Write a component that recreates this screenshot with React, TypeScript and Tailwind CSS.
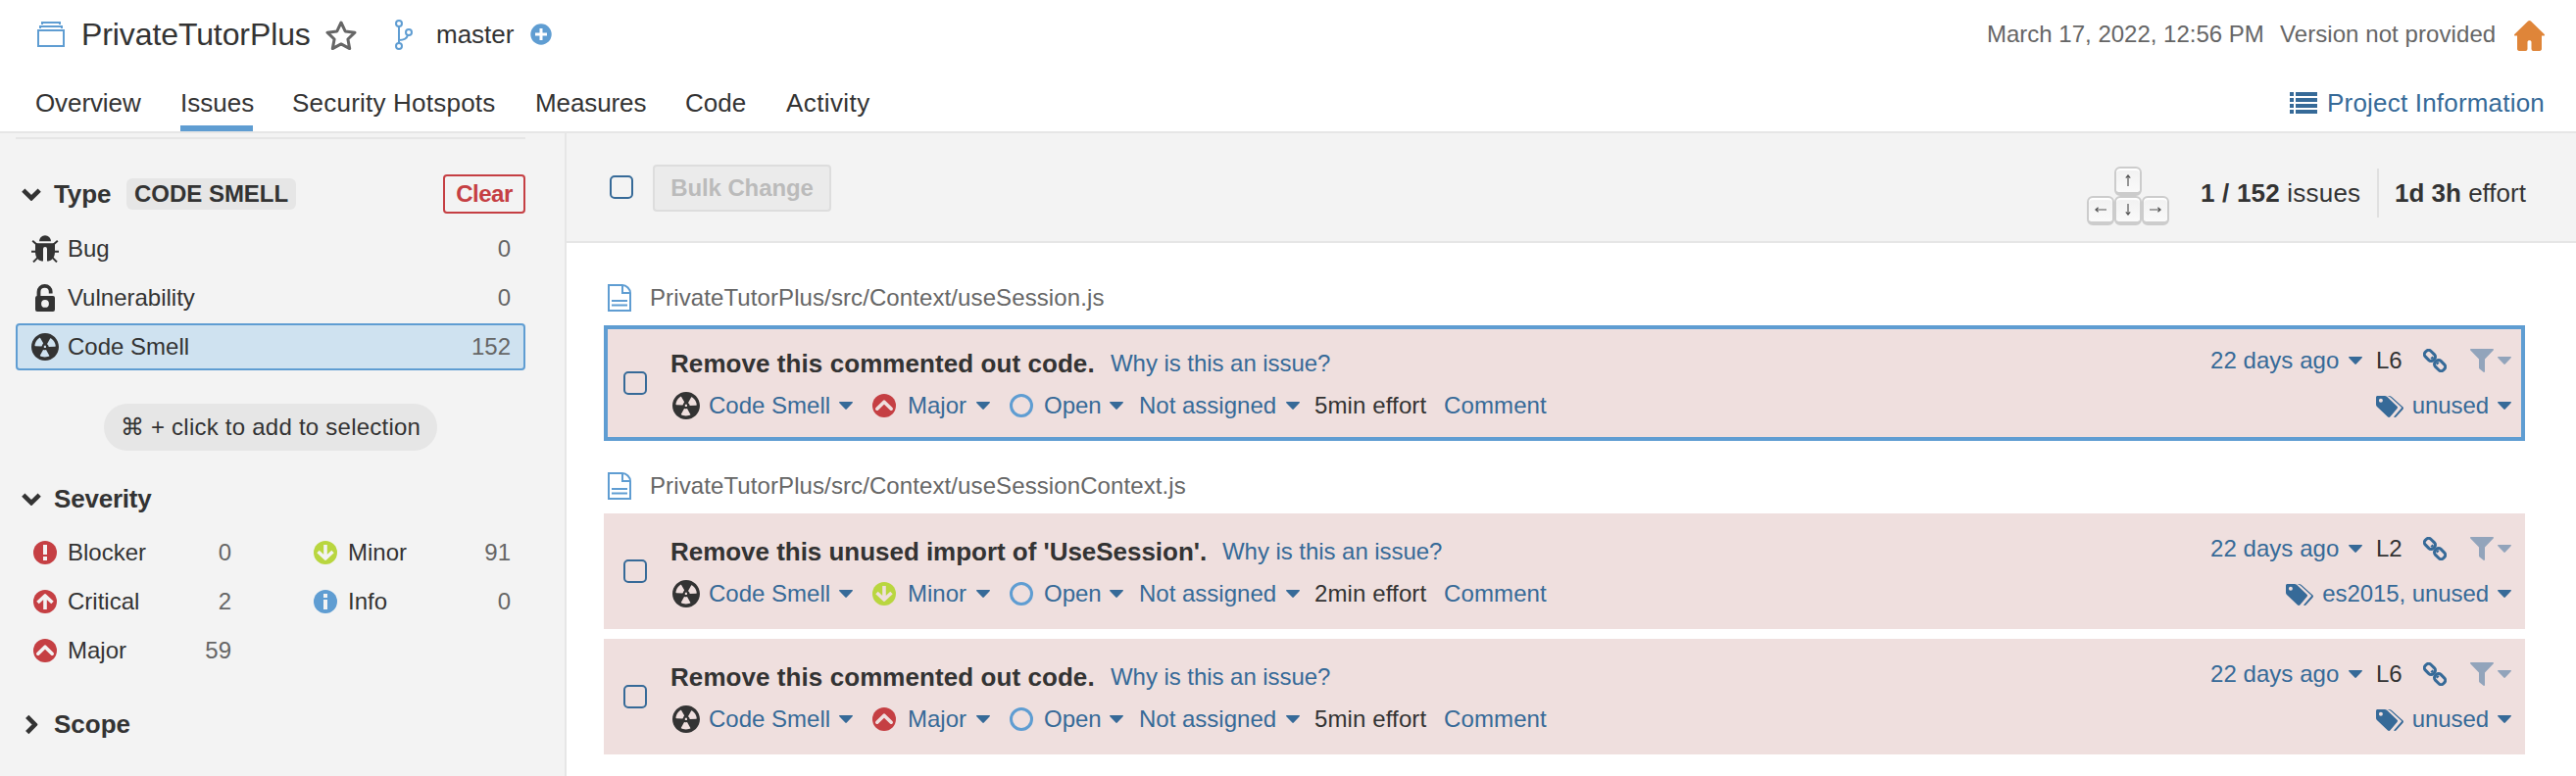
import React from "react";

const Caret = ({ muted = false }: { muted?: boolean }) => (
  <svg viewBox="0 0 14 8" className={muted ? "h-2 w-3.5 fill-[#92a4bb]" : "h-2 w-3.5 fill-[#366a98]"}>
    <path d="M0 .6C0 .2.3 0 .7 0h12.6c.5 0 .7.3.7.6 0 .2-.1.4-.3.6L7.8 7.6c-.4.5-1.1.5-1.5 0L.3 1.2C.1 1 0 .8 0 .6z" />
  </svg>
);

const BugIcon = () => (
  <svg viewBox="0 0 28 28" className="size-7 fill-[#333]">
    <path d="M8 6.200a6 6 0 0 1 12 0z" />
    <path d="M4 8.200h20v8.500c0 5-2 8-5 9.300-1 .4-2 .5-3 .5V14a2 2 0 0 0-4 0v12.500c-1 0-2-.1-3-.5-3-1.300-5-4.300-5-9.300z" />
    <path d="M1.200 5.800l4.500 4M26.800 5.800l-4.500 4M0 16.800h6M28 16.800h-6M2 27.400l5-5M26 27.400l-5-5" stroke="#333" strokeWidth="2" />
  </svg>
);

const LockIcon = () => (
  <svg viewBox="0 0 28 28" className="size-7 fill-[#333]">
    <path d="M7.500 13V8c0-3.600 2.700-6.100 6.200-6.100 3.400 0 6 2.400 6 5.900V9.500" fill="none" stroke="#333" strokeWidth="3.800" />
    <path fillRule="evenodd" d="M6 12h16a2 2 0 0 1 2 2v12a2 2 0 0 1-2 2H6a2 2 0 0 1-2-2V14a2 2 0 0 1 2-2zm8 4a3.900 3.900 0 1 0 0 7.800 3.900 3.900 0 0 0 0-7.800z" />
  </svg>
);

const SmellIcon = () => (
  <svg viewBox="2 2 12 12" className="size-7 fill-[#333]">
    <path d="M8 2C4.700 2 2 4.700 2 8s2.700 6 6 6 6-2.700 6-6-2.700-6-6-6zm-.5 5.500h.9v.9h-.9v-.9zm-3.800.2c-.1 0-.2-.1-.2-.2 0-.4.1-1.200.6-2S5.300 4.200 5.600 4c.2 0 .3 0 .3.1l1.300 2.300c0 .1 0 .2-.1.2-.1.2-.2.3-.3.5-.1.2-.2.4-.2.5 0 .1-.1.2-.2.2l-2.700-.1zM9.900 12c-.3.2-1.100.5-2 .5-.9 0-1.700-.3-2-.5-.1 0-.1-.2-.1-.3l1.300-2.300c0-.1.1-.1.2-.1.2.1.3.1.5.1s.4 0 .5-.1c.1 0 .2 0 .2.1l1.300 2.300c.2.2.2.3.1.3zm2.500-4.100L9.700 8c-.1 0-.2-.1-.2-.2 0-.2-.1-.4-.2-.5 0-.1-.2-.3-.3-.4-.1 0-.1-.1-.1-.2l1.300-2.300c.1-.1.2-.1.3-.1.3.2 1 .7 1.500 1.500s.6 1.600.6 2c0 0-.1.1-.2.1z" />
  </svg>
);

type Severity = "Blocker" | "Critical" | "Major" | "Minor" | "Info";

const SeverityIcon = ({ level, glyph = "#f3f3f3" }: { level: Severity; glyph?: string }) => (
  <svg viewBox="0 0 24 24" className="size-6">
    <circle cx="12" cy="12" r="12" fill={level === "Minor" ? "#b9d63f" : level === "Info" ? "#5f9dd2" : "#c53f43"} />
    {level === "Blocker" && <path d="M10 4h4v10h-4zM10 16h4v4h-4z" fill={glyph} />}
    {level === "Info" && <path d="M10 4h4v4h-4zM10 10h4v10h-4z" fill={glyph} />}
    {level === "Critical" && (
      <path d="M12 20V6.500M4.500 13L12 6l7.500 7" fill="none" stroke={glyph} strokeWidth="3.600" strokeLinejoin="round" />
    )}
    {level === "Minor" && (
      <path d="M12 4v13.500M4.500 11l7.500 7 7.500-7" fill="none" stroke={glyph} strokeWidth="3.600" strokeLinejoin="round" />
    )}
    {level === "Major" && (
      <path d="M4.800 15.200L12 8.200l7.200 7" fill="none" stroke={glyph} strokeWidth="3.600" strokeLinecap="round" strokeLinejoin="round" />
    )}
  </svg>
);

const Chevron = () => (
  <svg viewBox="0 0 20 13" className="h-[13px] w-5">
    <path d="M1.800 2.200L10 10.200l8.200-8" fill="none" stroke="#333" strokeWidth="4.600" />
  </svg>
);

const FileIcon = () => (
  <svg viewBox="0 0 24 28" className="h-7 w-6" fill="none" stroke="#5f9dd2" strokeWidth="2">
    <path d="M15 1H1v26h22V9c0-4-4-8-8-8zM15 1v8h8M4 17h16M4 21.500h16" />
  </svg>
);

const LinkIcon = () => (
  <svg viewBox="0 0 24 24" className="size-6" fill="none" stroke="#366a98" strokeWidth="3">
    <rect x="-5.800" y="-4" width="11.600" height="8" rx="3.200" transform="translate(6.900 6.900) rotate(45)" />
    <rect x="-5.800" y="-4" width="11.600" height="8" rx="3.200" transform="translate(17.100 17.100) rotate(45)" />
    <path d="M8.500 8.500l1.500 1.500M14 14l1.500 1.500" />
  </svg>
);

const FilterIcon = () => (
  <svg viewBox="0 0 24 24" className="size-6 fill-[#92a4bb]">
    <path d="M.8 0h22.400c.8 0 1 .9.5 1.500L15 10.500V23c0 .9-.8 1.200-1.400.7l-4-3.200c-.4-.3-.6-.7-.6-1.200v-8.800L.3 1.500C-.2.9 0 0 .8 0z" />
  </svg>
);

const TagsIcon = () => (
  <svg viewBox="0 0 28 22" className="h-[22px] w-7 fill-[#366a98]">
    <path fillRule="evenodd" d="M1.500 0h7.200c.9 0 1.900.4 2.600 1.100l10.200 9.600c.7.700.7 1.600 0 2.300l-7 8.300c-.7.900-1.800.9-2.500.2L1.200 11.300C.5 10.600 0 9.600 0 8.700V1.500C0 .7.700 0 1.500 0zm3.400 2.700a2 2 0 1 0 0 4 2 2 0 0 0 0-4z" />
    <path d="M11.500 0h1.800c.9 0 1.900.4 2.600 1.100l11.400 10.200c.8.700.9 1.600.2 2.400l-6.800 7.500c-.7.800-1.700.9-2.700.3l7.700-8.800c.4-.4.3-.8 0-1.100L15.300 2C14.200 1 13 .3 11.500 0z" />
  </svg>
);

const Checkbox = () => <span className="box-border block size-6 shrink-0 rounded-[5px] border-2 border-[#366a98]" />;

const Cell = ({ w, children }: { w: string; children: React.ReactNode }) => (
  <span className={"flex shrink-0 items-center whitespace-nowrap " + w}>{children}</span>
);

type Issue = { title: string; titleW: string; severity: Severity; effort: string; line: string; tags: string; selected?: boolean };

const issues: Issue[] = [
  { title: "Remove this commented out code.", titleW: "w-[449px] tracking-[0.07px]", severity: "Major", effort: "5min effort", line: "L6", tags: "unused", selected: true },
  { title: "Remove this unused import of 'UseSession'.", titleW: "w-[563px] tracking-[-0.03px]", severity: "Minor", effort: "2min effort", line: "L2", tags: "es2015, unused" },
  { title: "Remove this commented out code.", titleW: "w-[449px] tracking-[0.07px]", severity: "Major", effort: "5min effort", line: "L6", tags: "unused" },
];

const IssueCard = ({ issue }: { issue: Issue }) => (
  <article
    className={
      "flex h-[118px] w-[1960px] border-4 bg-[#efdfde] text-2xl leading-8 text-[#366a98] " +
      (issue.selected ? "border-[#5f9dd2]" : "border-[#efdfde]")
    }
  >
    <div className="flex w-16 items-center pl-4">
      <Checkbox />
    </div>
    <div className="flex grow flex-col pt-[19px]">
      <div className="flex h-8 items-center">
        <Cell w={issue.titleW}>
          <b className="text-[26px] text-[#333]">{issue.title}</b>
        </Cell>
        <span className="tracking-[-0.05px]">Why is this an issue?</span>
      </div>
      <div className="mt-[11px] flex h-8 items-center">
        <Cell w="w-[39px] pl-0.5"><SmellIcon /></Cell>
        <Cell w="w-[133px]">Code Smell</Cell>
        <Cell w="w-[34px]"><Caret /></Cell>
        <Cell w="w-9"><SeverityIcon level={issue.severity} glyph="#efdfde" /></Cell>
        <Cell w="w-[70px]">{issue.severity}</Cell>
        <Cell w="w-[34px]"><Caret /></Cell>
        <Cell w="w-[35px]">
          <svg viewBox="0 0 24 24" className="size-6"><circle cx="12" cy="12" r="10.500" fill="none" stroke="#5f9dd2" strokeWidth="3" /></svg>
        </Cell>
        <Cell w="w-[67px]">Open</Cell>
        <Cell w="w-[30px]"><Caret /></Cell>
        <Cell w="w-[150px]">Not assigned</Cell>
        <Cell w="w-[29px]"><Caret /></Cell>
        <Cell w="w-[132px] text-[#333] tracking-[0.12px]">{issue.effort}</Cell>
        <span className="tracking-[0.12px]">Comment</span>
      </div>
    </div>
    <div className="flex flex-col items-end pt-4 pr-2.5">
      <div className="flex h-8 items-center">
        <Cell w="w-[141px] tracking-[0.05px]">22 days ago</Cell>
        <Cell w="w-[28px]"><Caret /></Cell>
        <Cell w="w-12 text-[#333]">{issue.line}</Cell>
        <Cell w="w-12"><LinkIcon /></Cell>
        <Cell w="w-7"><FilterIcon /></Cell>
        <Caret muted />
      </div>
      <div className="mt-3.5 flex h-8 items-center">
        <Cell w="w-[37px] pt-0.5"><TagsIcon /></Cell>
        <span className="mr-[9px] tracking-[-0.08px]">{issue.tags}</span>
        <Caret />
      </div>
    </div>
  </article>
);

const FilePath = ({ path }: { path: string }) => (
  <div className="flex h-8 items-center gap-[19px] pl-1 text-2xl leading-8 text-[#666]">
    <FileIcon />
    <span className="tracking-[0.1px]">{path}</span>
  </div>
);

const Key = ({ children }: { children: React.ReactNode }) => (
  <span className="box-border flex h-[30px] w-7 items-center justify-center rounded-[6px] border-2 border-b-4 border-[#ccc] bg-linear-to-b from-[#f1f1f1] to-[#fafafa] inset-shadow-[0_2px_1px_#fff]">
    {children}
  </span>
);

const ArrowKey = ({ turn }: { turn: string }) => (
  <svg viewBox="0 0 12 12" className={"size-3 " + turn} fill="none" stroke="#555" strokeWidth="1.200">
    <path d="M6 12V1M3.800 3.600L6 .9l2.200 2.700" />
  </svg>
);

const SeverityRow = ({ level, count }: { level: Severity; count: number }) => (
  <div className="flex h-[50px] items-center">
    <SeverityIcon level={level} />
    <span className="ml-[11px] grow">{level}</span>
    <span className="text-[#666]">{count}</span>
  </div>
);

export default function App() {
  return (
    <div className="flex h-[792px] w-[2628px] flex-col overflow-hidden bg-white font-['Liberation_Sans',Arial,sans-serif] text-2xl text-[#333]">
      <header className="box-border h-[136px] shrink-0 border-b-2 border-[#e6e6e6]">
        <div className="flex h-[70px] items-center pr-8 pl-[38px] leading-8">
          <svg viewBox="0 0 28 26" className="h-[26px] w-7" fill="none" stroke="#5f9dd2" strokeWidth="2">
            <path d="M1 9h26v16H1zM3 7V5h22v2M5 3V1h18v2" />
          </svg>
          <h1 className="ml-[17px] w-[249px] text-[32px] tracking-[-0.1px] whitespace-nowrap">PrivateTutorPlus</h1>
          <svg viewBox="0 0 32 30" className="mt-0.5 h-[30px] w-8" fill="none" stroke="#666" strokeWidth="3" strokeLinejoin="round">
            <path d="M16 2l4.200 8.900 9.800 1.300-7.100 6.800 1.800 9.600L16 23.900 7.300 28.600l1.800-9.600L2 12.200l9.800-1.300z" />
          </svg>
          <svg viewBox="0 0 18 31" className="ml-[39px] h-[31px] w-[18px]" fill="none" stroke="#5f9dd2" strokeWidth="2">
            <circle cx="4" cy="4" r="3" />
            <circle cx="4" cy="27" r="3" />
            <circle cx="14" cy="13" r="3" />
            <path d="M4 7v17M4 21c5 0 8-1.500 9-5" />
          </svg>
          <span className="ml-6 w-[96px] text-[26px]">master</span>
          <svg viewBox="0 0 22 22" className="size-[22px]">
            <circle cx="11" cy="11" r="10.700" fill="#5f9dd2" />
            <path d="M11 5v12M5 11h12" stroke="#fff" strokeWidth="3" />
          </svg>
          <div className="ml-auto flex items-center text-[#666]">
            <span className="w-[299px] whitespace-nowrap">March 17, 2022, 12:56 PM</span>
            <span className="w-[239px] tracking-[0.07px] whitespace-nowrap">Version not provided</span>
            <svg viewBox="0 0 31 31" className="mt-0.5 h-[31px] w-[31px] fill-[#df8539]">
              <path d="M15.500 0c.6 0 1 .2 1.400.6l13.600 13.200c1 1 .4 1.700-.6 1.700H28v13.300c0 1.300-.8 2.200-2 2.200h-6.500a2 2 0 0 1-2-2v-7c0-1.200-.8-1.800-2-1.800s-2 .6-2 1.800v7a2 2 0 0 1-2 2H5c-1.200 0-2-.9-2-2.200V15.500H1.100c-1 0-1.600-.7-.6-1.700L14.100.6c.4-.4.800-.6 1.400-.6z" />
            </svg>
          </div>
        </div>
        <nav className="flex h-16 justify-between pr-8 pl-9 text-[26px] leading-[70px] whitespace-nowrap">
          <div className="flex gap-10">
            <span className="w-[108px] tracking-[-0.1px]">Overview</span>
            <span className="h-16 w-[74px] border-b-6 border-[#5f9dd2]">Issues</span>
            <span className="w-[208px] tracking-[0.22px]">Security Hotspots</span>
            <span className="w-[113px] tracking-[-0.1px]">Measures</span>
            <span className="w-[63px]">Code</span>
            <span className="tracking-[0.4px]">Activity</span>
          </div>
          <div className="flex gap-2.5 text-[#366a98]">
            <svg viewBox="0 0 28 22" className="mt-6 h-[22px] w-7 fill-[#366a98]">
              <path d="M0 0h4v4H0zM6 0h22v4H6zM0 6h4v4H0zM6 6h22v4H6zM0 12h4v4H0zM6 12h22v4H6zM0 18h4v4H0zM6 18h22v4H6z" />
            </svg>
            <span className="tracking-[0.2px]">Project Information</span>
          </div>
        </nav>
      </header>

      <div className="flex grow">
        <aside className="box-border flex w-[578px] shrink-0 flex-col border-r-2 border-[#e6e6e6] bg-[#f3f3f3] pt-1 pl-4">
          <div className="h-0.5 w-[520px] bg-[#e6e6e6]" />
          <div className="mt-9 flex h-10 w-[520px] items-center pl-1.5">
            <Chevron />
            <b className="ml-[13px] w-[74px] pt-px text-[26px] tracking-[-0.1px]">Type</b>
            <b className="flex h-8 items-center rounded-[6px] bg-[#e6e6e6] px-2 tracking-[-0.02px]">CODE SMELL</b>
            <b className="ml-auto box-border flex h-10 w-[84px] items-center justify-center rounded-[4px] border-2 border-[#c53f43] tracking-[-0.5px] text-[#c53f43]">Clear</b>
          </div>
          <div className="mt-3 w-[520px]">
            <div className="flex h-12 items-center pr-[15px] pl-4">
              <BugIcon /><span className="ml-[9px] grow">Bug</span><span className="text-[#666]">0</span>
            </div>
            <div className="mt-0.5 flex h-12 items-center pr-[15px] pl-4">
              <LockIcon /><span className="ml-[9px] grow">Vulnerability</span><span className="text-[#666]">0</span>
            </div>
            <div className="mt-0.5 box-border flex h-12 items-center rounded-[4px] border-2 border-[#5f9dd2] bg-[#cfe2f0] pr-[13px] pl-3.5">
              <SmellIcon /><span className="ml-[9px] grow">Code Smell</span><span className="text-[#666]">152</span>
            </div>
          </div>
          <div className="mt-[34px] ml-[90px] flex h-12 w-[340px] items-center justify-center rounded-full bg-[#e6e6e6] tracking-[0.24px]">⌘ + click to add to selection</div>
          <div className="mt-[33px] flex h-8 items-center pl-1.5">
            <Chevron />
            <b className="ml-[13px] text-[26px] tracking-[-0.2px]">Severity</b>
          </div>
          <div className="mt-3.5 flex w-[505px] justify-between pl-[18px]">
            <div className="w-[202px]">
              <SeverityRow level="Blocker" count={0} />
              <SeverityRow level="Critical" count={2} />
              <SeverityRow level="Major" count={59} />
            </div>
            <div className="w-[201px]">
              <SeverityRow level="Minor" count={91} />
              <SeverityRow level="Info" count={0} />
            </div>
          </div>
          <div className="mt-[34px] flex h-8 items-center pl-1.5">
            <span className="flex w-5 -rotate-90 justify-center"><Chevron /></span>
            <b className="ml-[13px] text-[26px]">Scope</b>
          </div>
        </aside>

        <main className="grow">
          <div className="box-border flex h-28 items-start border-b-2 border-[#e6e6e6] bg-[#f3f3f3] pr-[50px] pl-11">
            <div className="mt-[43px]"><Checkbox /></div>
            <b className="mt-8 ml-5 box-border flex h-12 w-[182px] items-center justify-center rounded-[4px] border-2 border-[#ddd] bg-[#ebebeb] tracking-[-0.1px] text-[#bbb]">Bulk Change</b>
            <div className="mt-[34px] ml-auto flex w-[84px] flex-wrap justify-center">
              <Key><ArrowKey turn="rotate-0" /></Key>
              <div className="flex">
                <Key><ArrowKey turn="-rotate-90" /></Key>
                <Key><ArrowKey turn="rotate-180" /></Key>
                <Key><ArrowKey turn="rotate-90" /></Key>
              </div>
            </div>
            <div className="mt-9 ml-8 flex h-[50px] items-center text-[26px] whitespace-nowrap">
              <span className="w-[180px] tracking-[0.2px]"><b>1 / 152</b> issues</span>
              <span className="h-[50px] w-0.5 bg-[#e0e0e0]" />
              <span className="ml-4 w-[135px]"><b>1d 3h</b> effort</span>
            </div>
          </div>
          <div className="flex flex-col pt-10 pl-[38px]">
            <FilePath path="PrivateTutorPlus/src/Context/useSession.js" />
            <div className="mt-3"><IssueCard issue={issues[0]} /></div>
            <div className="mt-[30px]"><FilePath path="PrivateTutorPlus/src/Context/useSessionContext.js" /></div>
            <div className="mt-3 flex flex-col gap-2.5">
              <IssueCard issue={issues[1]} />
              <IssueCard issue={issues[2]} />
            </div>
          </div>
        </main>
      </div>
    </div>
  );
}
